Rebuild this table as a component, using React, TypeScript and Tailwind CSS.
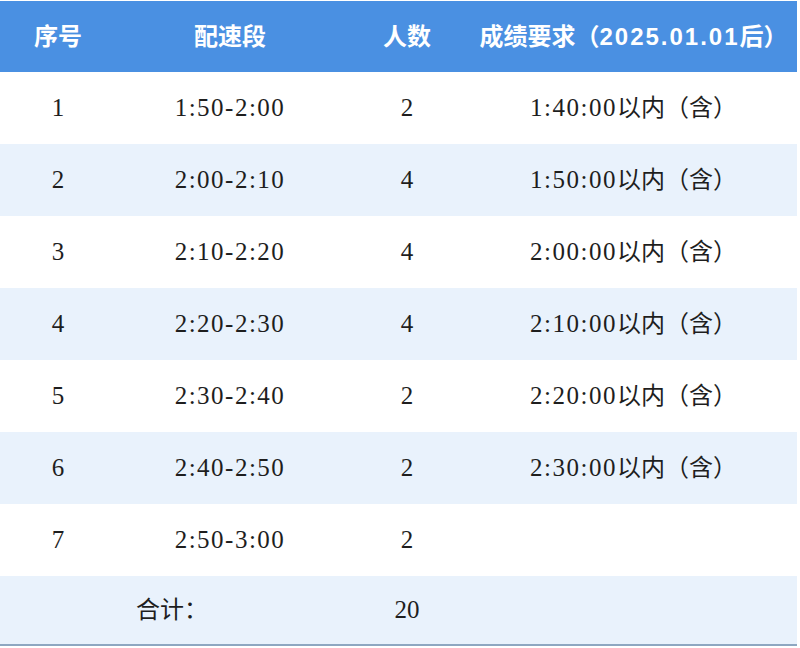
import React from "react";

const rows = [
  { n: "1", pace: "1:50-2:00", count: "2", req: "1:40:00" },
  { n: "2", pace: "2:00-2:10", count: "4", req: "1:50:00" },
  { n: "3", pace: "2:10-2:20", count: "4", req: "2:00:00" },
  { n: "4", pace: "2:20-2:30", count: "4", req: "2:10:00" },
  { n: "5", pace: "2:30-2:40", count: "2", req: "2:20:00" },
  { n: "6", pace: "2:40-2:50", count: "2", req: "2:30:00" },
  { n: "7", pace: "2:50-3:00", count: "2", req: "" },
];

const serif = "font-['Liberation_Serif','Noto_Sans_CJK_SC',serif]";

export default function App() {
  return (
    <div className="w-[800px] h-[648px] bg-white pt-px">
      <div className="w-[797px]">
        <div className="grid grid-cols-[116px_228px_126px_1fr] h-[71px] items-center bg-[#4a90e2] text-white text-[24px] font-bold font-['Liberation_Sans','Noto_Sans_CJK_SC',sans-serif]">
          <div className="text-center">序号</div>
          <div className="text-center">配速段</div>
          <div className="text-center">人数</div>
          <div className="text-center whitespace-nowrap">
            成绩要求（<span className="tracking-[2px]">2025.01.01</span>后）
          </div>
        </div>
        {rows.map((r, i) => (
          <div
            key={r.n}
            className={`grid grid-cols-[116px_228px_126px_1fr] h-[72px] items-center text-[25px] text-[#1e1e1e] ${serif} ${
              i % 2 === 1 ? "bg-[#e9f2fc]" : "bg-white"
            }`}
          >
            <div className="text-center">{r.n}</div>
            <div className="text-center tracking-[1.5px]">{r.pace}</div>
            <div className="text-center">{r.count}</div>
            <div className="text-center whitespace-nowrap">
              {r.req ? (
                <>
                  <span className="tracking-[1.5px]">{r.req}</span>
                  <span className="text-[24px]">以内（含）</span>
                </>
              ) : null}
            </div>
          </div>
        ))}
        <div className={`grid grid-cols-[344px_126px_1fr] h-[70px] items-center text-[25px] text-[#1e1e1e] bg-[#e9f2fc] border-b-2 border-[#8ea7c1] ${serif}`}>
          <div className="text-center text-[24px]">合计：</div>
          <div className="text-center">20</div>
          <div />
        </div>
      </div>
    </div>
  );
}
